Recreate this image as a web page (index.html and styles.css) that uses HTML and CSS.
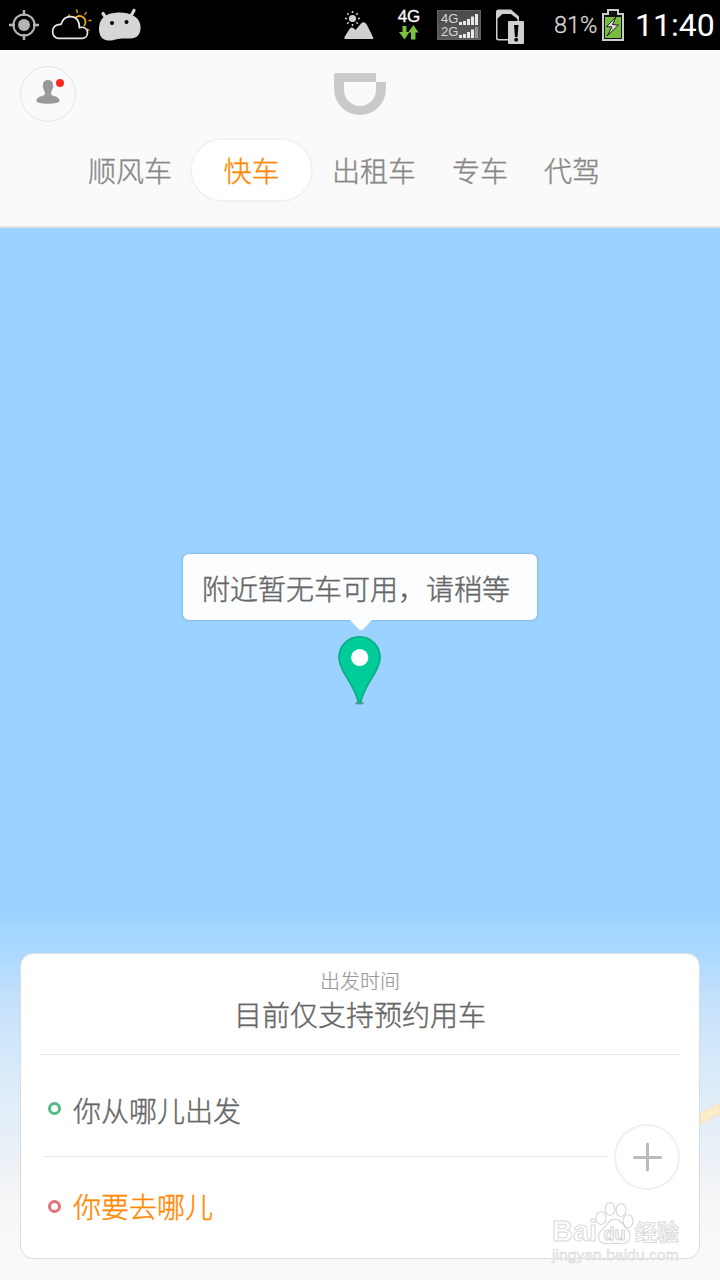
FILE: index.html
```html
<!DOCTYPE html>
<html lang="zh-CN">
<head>
  <meta charset="utf-8">
  <title>快车</title>
  <link rel="stylesheet" href="styles.css">
</head>
<body>
  <div class="status-bar">
    <svg class="icon-gps" viewBox="8 0 32 50" width="32" height="50">
      <circle cx="24" cy="25" r="10.6" fill="none" stroke="#b4b4b4" stroke-width="2"/>
      <circle cx="24" cy="25" r="6" fill="#b4b4b4"/>
      <path d="M24 10v6M24 34v6M9 25h6M33 25h6" stroke="#b4b4b4" stroke-width="2.4"/>
    </svg>
    <svg class="icon-weather" viewBox="50 0 44 50" width="44" height="50">
      <path d="M75 18a6 6 0 1 1 9 8" fill="none" stroke="#e8ae10" stroke-width="1.8"/>
      <path d="M68.500 14.500l1.500 2M76.500 9.500l1 3.500M86.500 12l-2 3M91.500 20.500h-3M87 29l2.500 1.500" stroke="#e8ae10" stroke-width="1.3"/>
      <path d="M58 38.300a6.300 6.300 0 0 1-5.300-7c0-4.500 3.500-7.300 8.300-7 1.500-5 5-7.700 9.500-7.700 5.500 0 9 3.700 8.900 11 4.500-1.200 8.100 1 8.100 5 0 3-1.800 5.700-5 5.700z" fill="#000" stroke="#e6e6e6" stroke-width="1.7"/>
    </svg>
    <svg class="icon-android" viewBox="97 0 46 50" width="46" height="50">
      <path d="M103 13.500l4 6M134 10.500l-4 7" stroke="#d6d6d6" stroke-width="3.200" stroke-linecap="round"/>
      <path d="M99 29c0-8 4-13 10-15 9-2.500 18-2 25 2 5 3 7 8 6.500 13-.5 6-4 9.500-10 9.500-5 0-10-.5-14 .7-4 1.300-7 1.800-11 .8-4.500-1.300-6.500-6-6.500-11z" fill="#d6d6d6"/>
      <circle cx="112" cy="23" r="2" fill="#000"/>
      <circle cx="126.500" cy="22" r="2" fill="#000"/>
    </svg>
    <svg class="icon-photo" viewBox="343 0 32 50" width="32" height="50">
      <circle cx="352.500" cy="18.500" r="3.600" fill="#d0d0d0"/>
      <path d="M352.500 11v2M352.500 24v2M345 18.500h2M358 18.500h2M347.200 13.200l1.500 1.500M356.300 22.300l1.500 1.500M347.200 23.800l1.500-1.500M356.300 14.700l1.500-1.500" stroke="#d0d0d0" stroke-width="1.5"/>
      <path d="M344.500 39v-2l5-8q2-2.500 4.500-.5l1.500 1.500 6-7q2.500-2 5 1l4.500 9 2.300 5v1z" fill="#d0d0d0"/>
    </svg>
    <div class="network">
      <span>4G</span>
      <svg viewBox="399 25 20 15" width="20" height="15">
        <path d="M402.500 26h4v6h3l-5 7.500-5.500-7.500h3.500zM411 39.500v-7h-3l5.500-7.500 5 7.500h-3v7z" fill="#7ac143"/>
      </svg>
    </div>
    <div class="signal">
      <div class="signal-row">
        <span>4G</span>
        <svg viewBox="0 0 20 12" width="20" height="12"><path d="M0 9h3v3H0zM4 8h3v4H4zM8 6h3v6H8zM12 3.500h3V12h-3zM16 1h3v11h-3z" fill="#e8e8e8"/></svg>
      </div>
      <div class="signal-row">
        <span>2G</span>
        <svg viewBox="0 0 20 12" width="20" height="12"><path d="M0 9h3v3H0zM4 8h3v4H4zM8 6h3v6H8zM12 3.500h3V12h-3z" fill="#e8e8e8"/><path d="M16 1h3v11h-3z" fill="#929292"/></svg>
      </div>
    </div>
    <svg class="icon-sim" viewBox="495 0 30 50" width="30" height="50">
      <path d="M496 38V12q0-2.500 2.500-2.500H511l8 7V21h-1.500v-2L511 14h-8.500l-5 4.500V38l1 1H508v1.500h-9.500Q496 40.500 496 38z" fill="#d0d0d0"/>
      <rect x="508" y="21" width="16" height="23" rx="1" fill="#d0d0d0"/>
      <path d="M514 25h4.500l-1 12h-2.500z" fill="#000"/>
      <circle cx="516.200" cy="39.700" r="1.900" fill="#000"/>
    </svg>
    <span class="percent">81%</span>
    <svg class="icon-battery" viewBox="602 0 22 50" width="22" height="50">
      <path d="M603 14h5v-4h10v4h5v26h-20z" fill="#111" stroke="#ccc" stroke-width="2"/>
      <path d="M605 17h16v21h-16z" fill="#76bd3f"/>
      <path d="M616 17l-9.500 9.500 5.500.5-5 9 11.500-11-6-.5z" fill="#ddd" stroke="#222" stroke-width="1"/>
    </svg>
    <span class="time">11:40</span>
  </div>

  <div class="header">
    <div class="top-row">
      <div class="avatar">
        <svg viewBox="36 78 30 28" width="30" height="28">
          <path d="M48 80c3.500 0 5.300 2 5 6 .5.500.300 1.500-.4 2.500-.4 2-1.100 3-1.600 3.800 0 2.200.500 3 3 3.700 3.500 1 5.700 2.500 5.700 5 0 1.500-5 2.700-11.700 2.700S36.300 102.500 36.300 101c0-2.500 2.200-4 5.700-5 2.500-.7 3-1.500 3-3.700-.5-.8-1.200-1.800-1.600-3.800-.7-1-.9-2-.4-2.500-.3-4 1.500-6 5-6z" fill="#999"/>
          <circle cx="60" cy="83" r="4" fill="#fd2a22"/>
        </svg>
      </div>
      <svg class="logo" viewBox="0 0 52 42" width="52" height="42">
        <path d="M2 0h40v9H10v8a16 16 0 0 0 32 0V9h10v7a26 26 0 0 1-52 0V2q0-2 2-2z" fill="#cacaca"/>
      </svg>
    </div>
    <div class="tabs">
      <span class="tab">顺风车</span>
      <span class="tab active">快车</span>
      <span class="tab">出租车</span>
      <span class="tab">专车</span>
      <span class="tab">代驾</span>
    </div>
  </div>

  <div class="map">
    <svg class="road" viewBox="0 0 20 24" width="20" height="24">
      <path d="M0 11L20 1v11L0 22z" fill="#faecc6" stroke="#f2dfc8" stroke-width="1"/>
    </svg>
    <div class="bubble">附近暂无车可用，请稍等</div>
    <svg class="bubble-tail" viewBox="0 0 22 11" width="22" height="11">
      <path d="M0 0h22l-9 9.500q-2 1.500-4 0z" fill="#fcfdff"/>
    </svg>
    <svg class="pin" viewBox="0 0 44 70" width="44" height="70">
      <ellipse cx="21.500" cy="68.300" rx="4.500" ry="1.300" fill="#6b8fae"/>
      <path d="M21.500 1.800C10 1.800 .9 11 .9 22.500c0 6 2.600 11 6.100 17 6 10 11.500 18 13.500 28.500h2c2-10.500 7.500-18.500 13.500-28.500 3.500-6 6.100-11 6.100-17C42.100 11 33 1.800 21.500 1.800z" fill="#00cc99" stroke="#0aab82" stroke-width="1.600"/>
      <circle cx="21.700" cy="22.500" r="8.600" fill="#fff"/>
    </svg>

    <div class="card">
      <div class="depart">
        <div class="depart-label">出发时间</div>
        <div class="depart-value">目前仅支持预约用车</div>
      </div>
      <div class="routes">
        <div class="route">
          <span class="dot from"></span>
          <span>你从哪儿出发</span>
        </div>
        <div class="route-line"></div>
        <div class="route to">
          <span class="dot dest"></span>
          <span>你要去哪儿</span>
        </div>
        <div class="add">
          <svg viewBox="0 0 30 30" width="30" height="30">
            <path d="M15.500 2v26M2.500 15.500h26" stroke="#bbbbb9" stroke-width="3" stroke-linecap="round"/>
          </svg>
        </div>
      </div>
    </div>

    <div class="watermark">
      <div class="wm-top">
        <span class="wm-bai">Bai</span>
        <svg class="wm-paw" viewBox="0 0 40 44" width="40" height="44">
          <g fill="#fff" stroke="#d8d8d8" stroke-width="1.200">
            <ellipse cx="6" cy="17" rx="5" ry="6.500"/>
            <ellipse cx="15" cy="8" rx="4.800" ry="6.500"/>
            <ellipse cx="26" cy="9" rx="5" ry="6.500"/>
            <ellipse cx="33" cy="20" rx="5" ry="6.500"/>
            <path d="M20 18c5 0 7 4 10 8 4 3 6 6 5 10-1 5-5 6.500-8 6.500-5 0-9-.5-14 0C8 43 4 41 3.500 36.500 3 32 6 29 10 26c3-4 5-8 10-8z"/>
          </g>
          <text x="19.500" y="38.500" text-anchor="middle" class="wm-du">du</text>
        </svg>
        <span class="wm-cn">经验</span>
      </div>
      <div class="wm-url">jingyan.baidu.com</div>
    </div>
  </div>
</body>
</html>
```

FILE: styles.css
```css
* {
  box-sizing: border-box;
}

body {
  margin: 0;
  width: 720px;
  height: 1280px;
  display: flex;
  flex-direction: column;
  overflow: hidden;
  font-family: "Noto Sans CJK SC", sans-serif;
  font-weight: 300;
  font-size: 28px;
  color: #666;
  -webkit-text-stroke: 0.4px;
}

svg {
  display: block;
  flex: none;
}

/* status bar */
.status-bar {
  display: flex;
  align-items: center;
  height: 50px;
  padding-left: 8px;
  background: #000;
  color: #fff;
  font-family: Roboto, sans-serif;
  white-space: nowrap;
  -webkit-text-stroke: 0;
}

.icon-weather {
  margin-left: 10px;
}

.icon-android {
  margin-left: 3px;
}

.icon-photo {
  margin-left: 200px;
}

.network {
  display: flex;
  flex-direction: column;
  align-items: center;
  width: 26px;
  margin-left: 21px;
  padding-bottom: 1px;
  font-family: "Liberation Sans", sans-serif;
  font-size: 17px;
  line-height: 16px;
  font-weight: 400;
  -webkit-text-stroke: 0.3px #fff;
}

.signal {
  display: flex;
  flex-direction: column;
  justify-content: center;
  gap: 1px;
  width: 44px;
  height: 30px;
  margin-left: 15px;
  padding-left: 3px;
  border: 1px solid #626262;
  background: linear-gradient(#4a4a4a, #5c5c5c);
}

.signal-row {
  display: flex;
  align-items: center;
  gap: 1px;
  height: 12px;
  color: #d8d8d8;
  font-family: "Liberation Sans", sans-serif;
  font-size: 13px;
  line-height: 12px;
  font-weight: 400;
}

.icon-sim {
  margin-left: 14px;
}

.percent {
  width: 48px;
  margin-left: 29px;
  font-size: 23.5px;
  color: #d8d8d8;
  -webkit-text-stroke: 0.3px;
}

.time {
  margin-left: 11px;
  font-size: 32px;
  font-weight: 400;
}

/* header */
.header {
  height: 178px;
  padding-top: 16px;
  background: #fafafa;
  border-bottom: 2px solid #e2e2e4;
}

.top-row {
  display: grid;
  grid-template-columns: 1fr 52px 1fr;
  align-items: center;
  height: 56px;
  padding: 0 20px;
}

.avatar {
  display: flex;
  width: 56px;
  height: 56px;
  padding: 11px 0 0 15px;
  border: 1px solid #e4e4e4;
  border-radius: 50%;
}

.tabs {
  display: flex;
  align-items: center;
  height: 63px;
  margin-top: 16px;
  padding-left: 70px;
  color: #888;
}

.tab {
  padding: 0 18px;
  line-height: 60px;
}

.tab.active {
  width: 123px;
  margin-right: 1px;
  padding: 0;
  text-align: center;
  color: #ff8903;
  background: #fff;
  border: 2px solid #f2f2f2;
  border-radius: 32px;
}

/* map */
.map {
  position: relative;
  flex: 1;
  display: flex;
  flex-direction: column;
  align-items: center;
  padding: 326px 20px 21px;
  background: linear-gradient(#9bd2ff 0, #9bd2ff 680px, #a9d8ff 722px, #c4e1fb 772px, #deedf9 862px, #e7eff7 912px, #f6f6f7 977px, #faf9f7 1010px);
}

.road {
  position: absolute;
  right: 0;
  top: 874px;
}

.bubble {
  width: 354px;
  height: 66px;
  padding-left: 19px;
  line-height: 68px;
  background: #fcfdff;
  border-radius: 6px;
  box-shadow: 0 0 2px rgba(60, 100, 150, 0.6);
}

.bubble-tail {
  position: relative;
  left: 1px;
}

.pin {
  margin-top: 4px;
}

.card {
  width: 680px;
  height: 306px;
  margin-top: auto;
  padding: 0 19px;
  background: #fff;
  border: 1px solid #d9dce0;
  border-radius: 13px;
}

.depart {
  height: 101px;
  padding-top: 14px;
  text-align: center;
  border-bottom: 1px solid #e8e8e8;
}

.depart-label {
  font-size: 20px;
  line-height: 26px;
  color: #999;
  -webkit-text-stroke: 0.2px;
}

.depart-value {
  line-height: 41px;
}

.routes {
  display: grid;
  grid-template-columns: 568px 1fr;
  grid-template-rows: 101px 1px 101px;
}

.route {
  display: flex;
  align-items: center;
  gap: 12px;
  padding: 9px 0 0 8px;
}

.route.to {
  grid-row: 3;
  padding: 0 0 3px 8px;
  color: #ff8903;
}

.route-line {
  grid-row: 2;
  margin-left: 3px;
  background: #e8e8e8;
}

.dot {
  width: 13px;
  height: 13px;
  margin-top: -4px;
  border: 3px solid #55b985;
  border-radius: 50%;
}

.dot.dest {
  margin-top: 1px;
  border-color: #e4727b;
}

.add {
  grid-column: 2;
  grid-row: 1 / 4;
  align-self: center;
  display: flex;
  align-items: center;
  justify-content: center;
  width: 66px;
  height: 66px;
  margin-left: 6px;
  border: 2px solid #f0f0f0;
  border-radius: 50%;
}

/* watermark */
.watermark {
  position: absolute;
  left: 552px;
  top: 973px;
  width: 130px;
  color: #fff;
  font-family: "Liberation Sans", "Noto Sans CJK SC", sans-serif;
  font-weight: 700;
  -webkit-text-stroke: 1px #dadada;
}

.wm-top {
  display: flex;
  align-items: flex-end;
  height: 44px;
  white-space: nowrap;
}

.wm-bai {
  width: 43px;
  font-size: 29px;
  line-height: 28px;
}

.wm-cn {
  font-size: 22px;
  line-height: 24px;
}

.wm-du {
  font-size: 18px;
  fill: #fff;
  stroke: #d4d4d4;
  stroke-width: 1px;
}

.wm-url {
  font-size: 15.5px;
  line-height: 19px;
  font-weight: 400;
  letter-spacing: 0.1px;
  -webkit-text-stroke: 0.6px #d4d4d4;
}
```
